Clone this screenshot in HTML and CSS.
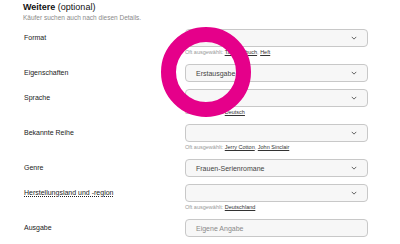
FILE: index.html
```html
<!DOCTYPE html>
<html lang="de">
<head>
  <meta charset="UTF-8" />
  <meta name="viewport" content="width=device-width, initial-scale=1" />
  <title>Weitere Angaben</title>
  <link rel="stylesheet" href="styles.css">
</head>
<body>
  <section class="details">
    <h2><b>Weitere</b> (optional)</h2>
    <p class="intro">Käufer suchen auch nach diesen Details.</p>

    <div class="form-row">
      <label>Format</label>
      <div class="field">
        <div class="select"><span></span><svg class="chev" viewBox="0 0 8 5"><path d="M1 1l3 3 3-3" /></svg></div>
        <p class="hint">Oft ausgewählt: <a href="#">Taschenbuch</a>, <a href="#">Heft</a></p>
      </div>
    </div>

    <div class="form-row">
      <label>Eigenschaften</label>
      <div class="field">
        <div class="select"><span>Erstausgabe</span><svg class="chev" viewBox="0 0 8 5"><path d="M1 1l3 3 3-3" /></svg></div>
      </div>
    </div>

    <div class="form-row">
      <label>Sprache</label>
      <div class="field">
        <div class="select"><span></span><svg class="chev" viewBox="0 0 8 5"><path d="M1 1l3 3 3-3" /></svg></div>
        <p class="hint">Oft ausgewählt: <a href="#">Deutsch</a></p>
      </div>
    </div>

    <div class="form-row">
      <label>Bekannte Reihe</label>
      <div class="field">
        <div class="select"><span></span><svg class="chev" viewBox="0 0 8 5"><path d="M1 1l3 3 3-3" /></svg></div>
        <p class="hint">Oft ausgewählt: <a href="#">Jerry Cotton</a>, <a href="#">John Sinclair</a></p>
      </div>
    </div>

    <div class="form-row">
      <label>Genre</label>
      <div class="field">
        <div class="select"><span>Frauen-Serienromane</span><svg class="chev" viewBox="0 0 8 5"><path d="M1 1l3 3 3-3" /></svg></div>
      </div>
    </div>

    <div class="form-row">
      <label class="dotted">Herstellungsland und -region</label>
      <div class="field">
        <div class="select"><span></span><svg class="chev" viewBox="0 0 8 5"><path d="M1 1l3 3 3-3" /></svg></div>
        <p class="hint">Oft ausgewählt: <a href="#">Deutschland</a></p>
      </div>
    </div>

    <div class="form-row">
      <label>Ausgabe</label>
      <div class="field">
        <div class="select input"><span>Eigene Angabe</span></div>
      </div>
    </div>
  </section>

  <div class="ring"></div>
</body>
</html>
```

FILE: styles.css
```css
body {
  margin: 0;
  padding: 0 32px 0 23px;
  font-family: "Liberation Sans", Arial, sans-serif;
  color: #222;
  background: #fff;
}

.details h2 {
  margin: 2px 0 0;
  font-size: 9px;
  line-height: 11px;
  font-weight: normal;
  color: #111;
}

.details h2 b {
  font-weight: bold;
}

.intro {
  margin: 1px 0 7px;
  font-size: 6.5px;
  line-height: 8px;
  color: #8a8a8a;
}

.form-row {
  display: grid;
  grid-template-columns: 162px 183px;
  margin-bottom: 7px;
}

.form-row label {
  font-size: 7px;
  line-height: 18px;
  padding-left: 1px;
  color: #222;
}

.dotted {
  text-decoration: underline dotted;
  text-underline-offset: 1px;
}

.select {
  height: 18px;
  box-sizing: border-box;
  border: 1px solid #c8c8c8;
  border-radius: 4px;
  background: #f7f7f7;
  display: flex;
  align-items: center;
  justify-content: space-between;
  padding: 0 10px;
  font-size: 7px;
  color: #444;
}

.select.input span {
  color: #8a8a8a;
}

.chev {
  width: 6px;
  height: 4px;
  fill: none;
  stroke: #444;
  stroke-width: 1.1;
}

.hint {
  margin: 1px 0 0;
  height: 9px;
  font-size: 5.5px;
  line-height: 9px;
  color: #999;
}

.hint a {
  color: #333;
}

.ring {
  position: absolute;
  left: 161px;
  top: 27px;
  width: 60px;
  height: 60px;
  border: 15px solid #e5008a;
  border-radius: 50%;
}
```
